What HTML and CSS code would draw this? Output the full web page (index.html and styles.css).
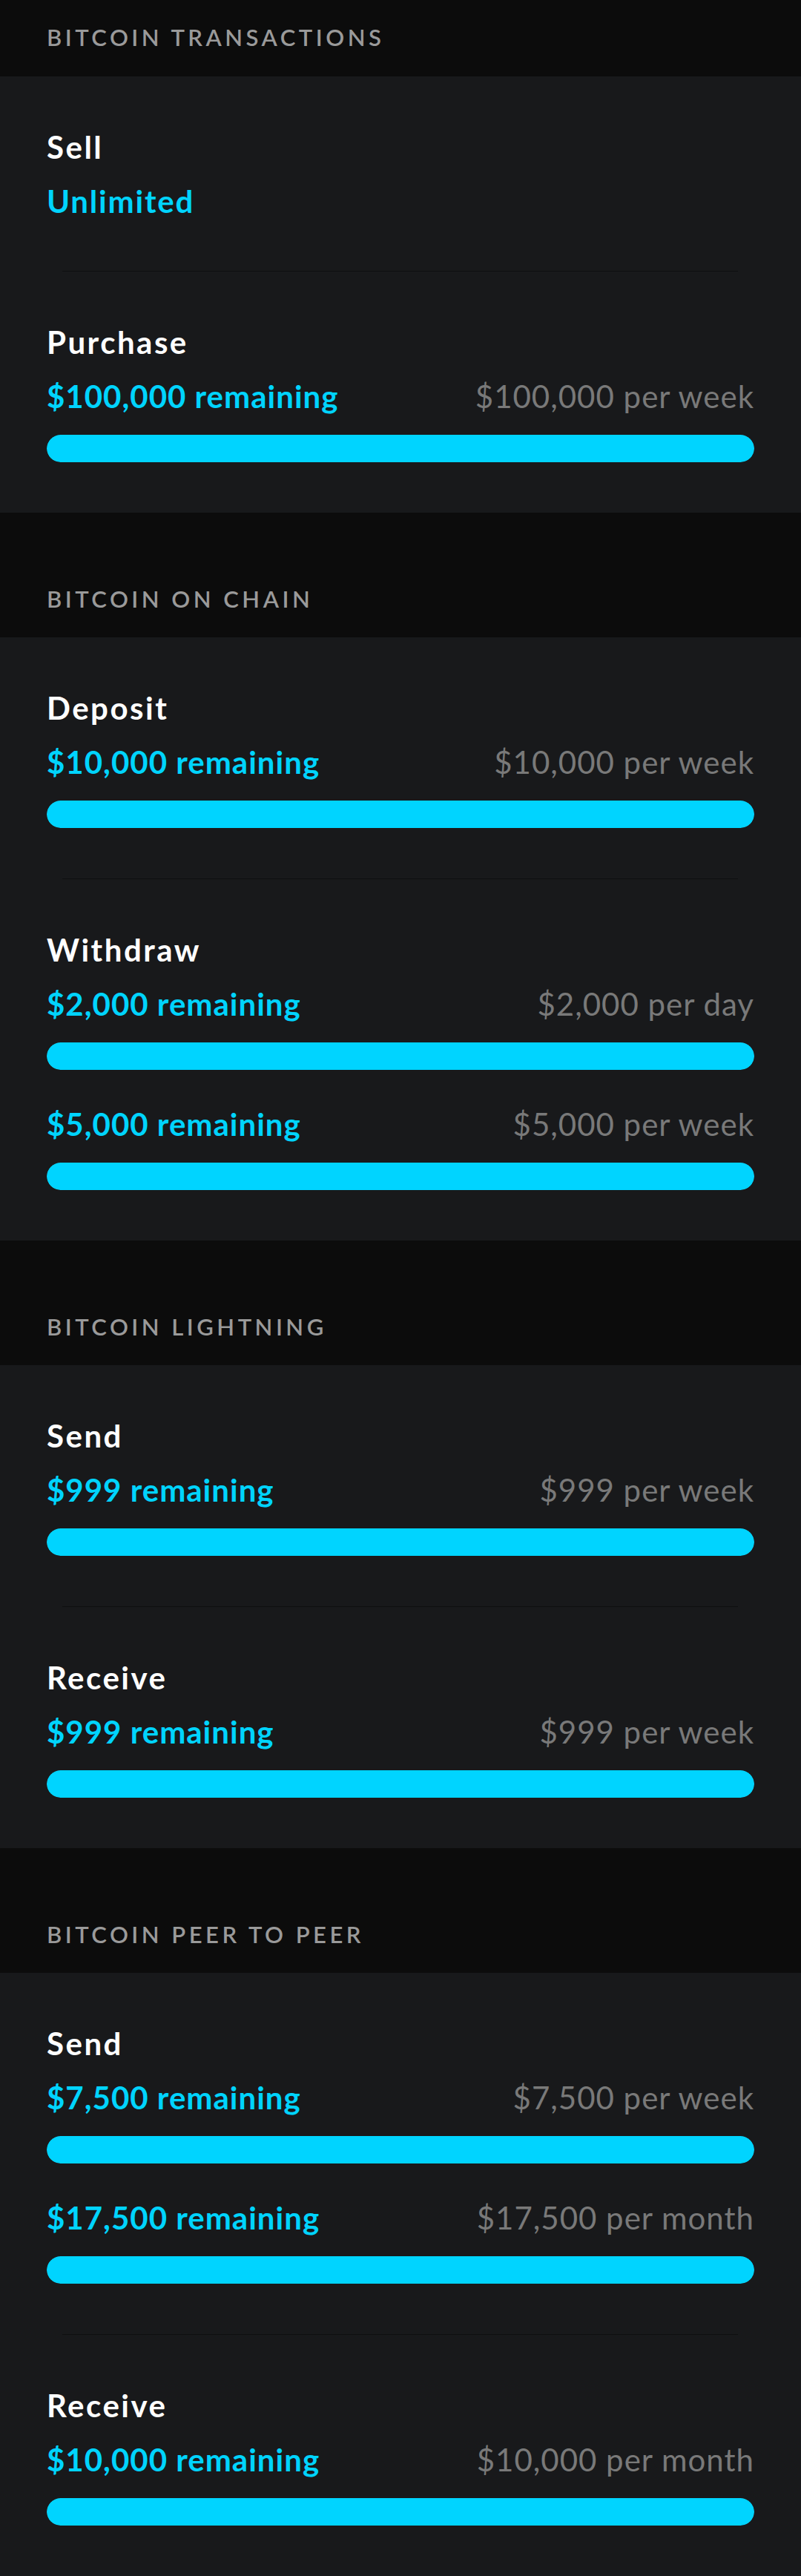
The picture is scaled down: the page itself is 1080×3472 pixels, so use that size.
FILE: index.html
```html
<!DOCTYPE html>
<html lang="en">
<head>
<meta charset="utf-8">
<title>Bitcoin limits</title>
<link rel="stylesheet" href="styles.css">
</head>
<body>
<main class="page">

  <section class="group">
    <h2 class="group-title group-title--first">Bitcoin Transactions</h2>
    <div class="card">
      <div class="item item--nobar">
        <div class="item-title">Sell</div>
        <div class="limit">
          <div class="limit-row"><span class="remaining remaining--wide">Unlimited</span></div>
        </div>
      </div>
      <div class="divider"></div>
      <div class="item">
        <div class="item-title">Purchase</div>
        <div class="limit">
          <div class="limit-row"><span class="remaining">$100,000 remaining</span><span class="period">$100,000 per week</span></div>
          <div class="bar"><div class="bar-fill" style="width:100%"></div></div>
        </div>
      </div>
    </div>
  </section>

  <section class="group">
    <h2 class="group-title">Bitcoin On Chain</h2>
    <div class="card">
      <div class="item">
        <div class="item-title">Deposit</div>
        <div class="limit">
          <div class="limit-row"><span class="remaining">$10,000 remaining</span><span class="period">$10,000 per week</span></div>
          <div class="bar"><div class="bar-fill" style="width:100%"></div></div>
        </div>
      </div>
      <div class="divider"></div>
      <div class="item">
        <div class="item-title">Withdraw</div>
        <div class="limit">
          <div class="limit-row"><span class="remaining">$2,000 remaining</span><span class="period">$2,000 per day</span></div>
          <div class="bar"><div class="bar-fill" style="width:100%"></div></div>
        </div>
        <div class="limit">
          <div class="limit-row"><span class="remaining">$5,000 remaining</span><span class="period">$5,000 per week</span></div>
          <div class="bar"><div class="bar-fill" style="width:100%"></div></div>
        </div>
      </div>
    </div>
  </section>

  <section class="group">
    <h2 class="group-title">Bitcoin Lightning</h2>
    <div class="card">
      <div class="item">
        <div class="item-title">Send</div>
        <div class="limit">
          <div class="limit-row"><span class="remaining">$999 remaining</span><span class="period">$999 per week</span></div>
          <div class="bar"><div class="bar-fill" style="width:100%"></div></div>
        </div>
      </div>
      <div class="divider"></div>
      <div class="item">
        <div class="item-title">Receive</div>
        <div class="limit">
          <div class="limit-row"><span class="remaining">$999 remaining</span><span class="period">$999 per week</span></div>
          <div class="bar"><div class="bar-fill" style="width:100%"></div></div>
        </div>
      </div>
    </div>
  </section>

  <section class="group">
    <h2 class="group-title">Bitcoin Peer to Peer</h2>
    <div class="card">
      <div class="item">
        <div class="item-title">Send</div>
        <div class="limit">
          <div class="limit-row"><span class="remaining">$7,500 remaining</span><span class="period">$7,500 per week</span></div>
          <div class="bar"><div class="bar-fill" style="width:100%"></div></div>
        </div>
        <div class="limit">
          <div class="limit-row"><span class="remaining">$17,500 remaining</span><span class="period">$17,500 per month</span></div>
          <div class="bar"><div class="bar-fill" style="width:100%"></div></div>
        </div>
      </div>
      <div class="divider"></div>
      <div class="item">
        <div class="item-title">Receive</div>
        <div class="limit">
          <div class="limit-row"><span class="remaining">$10,000 remaining</span><span class="period">$10,000 per month</span></div>
          <div class="bar"><div class="bar-fill" style="width:100%"></div></div>
        </div>
      </div>
    </div>
  </section>

</main>
</body>
</html>
```

FILE: styles.css
```css
* {
  box-sizing: border-box;
}

html, body {
  margin: 0;
  padding: 0;
  background: #18191b;
}

body {
  font-family: Lato, "Liberation Sans", sans-serif;
  color: #ffffff;
}

.page {
  display: flex;
  flex-direction: column;
}

.group {
  display: flex;
  flex-direction: column;
}

.group-title {
  margin: 0;
  background: #0c0c0c;
  padding: 97px 63px 33px;
  font-size: 31px;
  line-height: 38px;
  font-weight: 600;
  letter-spacing: 4.5px;
  text-transform: uppercase;
  color: #9a9a9a;
}

.group-title--first {
  padding-top: 31px;
  padding-bottom: 34px;
}

.card {
  background: #18191b;
  display: flex;
  flex-direction: column;
}

.item {
  padding: 71px 63px 68px;
  display: flex;
  flex-direction: column;
}

.item--nobar {
  padding-bottom: 70px;
}

.item-title {
  font-size: 42px;
  line-height: 48px;
  font-weight: 700;
  letter-spacing: 2.5px;
  color: #ffffff;
}

.limit {
  display: flex;
  flex-direction: column;
  margin-top: 25px;
}

.limit + .limit {
  margin-top: 49px;
}

.limit-row {
  display: flex;
  justify-content: space-between;
  align-items: baseline;
  font-size: 42px;
  line-height: 48px;
  letter-spacing: 1px;
}

.remaining {
  color: #00d4ff;
  font-weight: 700;
}

.remaining--wide {
  letter-spacing: 1.8px;
}

.period {
  color: #797979;
  font-weight: 400;
}

.bar {
  margin-top: 28px;
  height: 37px;
  border-radius: 19px;
  background: #2a2c2f;
  overflow: hidden;
}

.bar-fill {
  height: 100%;
  background: #00d4ff;
  border-radius: 19px;
}

.divider {
  height: 1px;
  margin: 0 85px 0 84px;
  background: #0e0f10;
}
```
